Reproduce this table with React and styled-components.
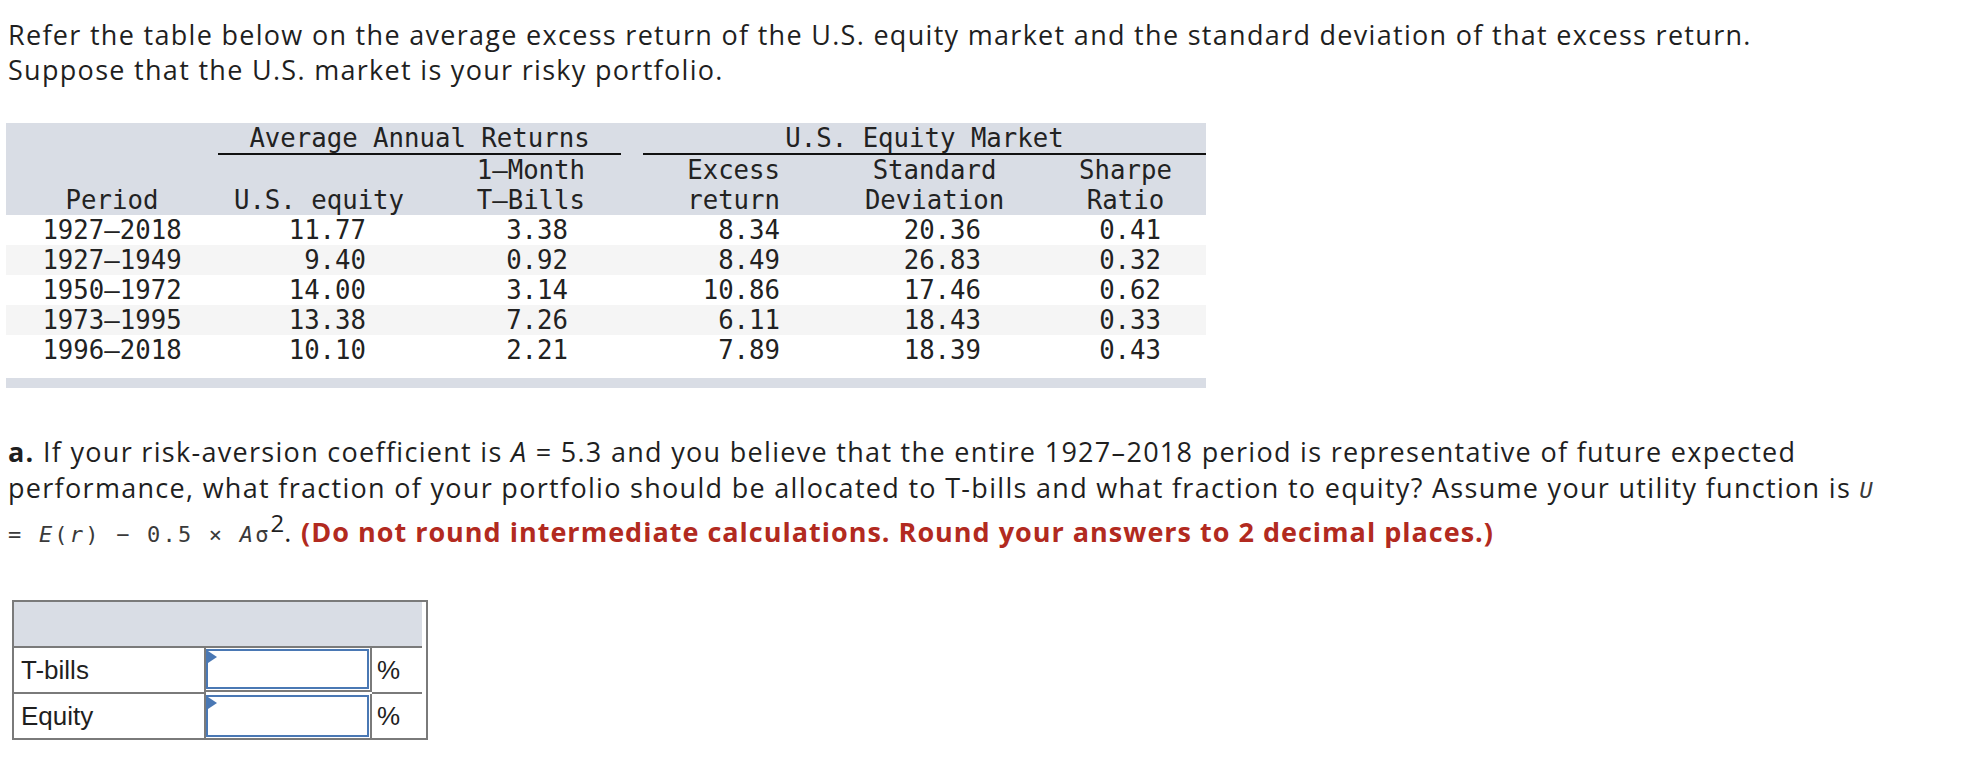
import React from 'react'
import styled, { createGlobalStyle } from 'styled-components'

const GlobalStyle = createGlobalStyle`
  html, body {
    margin: 0;
    padding: 0;
    background: #ffffff;
  }
  body {
    font-family: "Open Sans", Lato, "Liberation Sans", sans-serif;
    color: #1f1f1f;
  }
`

const COLS = '212px 202px 201px 22px 187px 209px 167px'

const Page = styled.div`
  padding: 17px 0 0 6px;
  width: 1960px;
`

const Intro = styled.p`
  margin: 0 0 0 2px;
  font-size: 27px;
  letter-spacing: 1.3px;
  line-height: 35px;
  white-space: nowrap;
`

const DataTable = styled.div`
  margin-top: 36px;
  width: 1200px;
  font-family: "DejaVu Sans Mono", "Liberation Mono", monospace;
  font-size: 25.7px;
  color: #222;
`

const Head = styled.div`
  background: #d9dde5;
  display: grid;
  grid-template-columns: ${COLS};
`

const GroupCell = styled.div`
  grid-column: ${p => p.$col};
  height: 30px;
  line-height: 30px;
  text-align: center;
  white-space: pre;
  border-bottom: 2px solid ${p => (p.$rule ? '#111' : 'transparent')};
`

const HeadCell = styled.div`
  grid-column: ${p => p.$col};
  line-height: 30px;
  height: 60px;
  display: flex;
  flex-direction: column;
  justify-content: flex-end;
  text-align: ${p => p.$align || 'center'};
  padding-right: ${p => p.$pr || 0}px;
  padding-left: ${p => p.$pl || 0}px;
  white-space: pre;
`

const Row = styled.div`
  display: grid;
  grid-template-columns: ${COLS};
  height: 30px;
  line-height: 30px;
  background: ${p => (p.$stripe ? '#f5f5f5' : '#ffffff')};
`

const Cell = styled.div`
  text-align: ${p => p.$align || 'right'};
  padding-right: ${p => p.$pr || 0}px;
  white-space: pre;
`

const FootBar = styled.div`
  margin-top: 13px;
  height: 10px;
  background: #d9dde5;
`

const Question = styled.div`
  margin: 46px 0 0 2px;
  font-size: 27px;
  letter-spacing: 1.3px;
  line-height: 36px;
  white-space: nowrap;
`

const Line = styled.div`
  margin-top: ${p => p.$gap || 0}px;
`

const Bold = styled.b`
  font-weight: 700;
`

const Ital = styled.i`
  font-style: italic;
`

const Formula = styled.span`
  font-family: "DejaVu Sans Mono", "Liberation Mono", monospace;
  font-size: 22px;
  letter-spacing: 2.2px;
  color: #3a3a3a;
`

const Sup = styled.sup`
  font-size: 24px;
  line-height: 0;
  letter-spacing: 0;
`

const Warn = styled.span`
  color: #b22a20;
  font-weight: 700;
  letter-spacing: 1px;
`

const AnswerTable = styled.div`
  margin: 47px 0 0 6px;
  width: 412px;
  display: grid;
  grid-template-columns: 192px 166px 50px;
  border: 2px solid #7a7a7a;
  font-family: "Liberation Sans", Arial, sans-serif;
  font-size: 26px;
  color: #1f1f1f;
`

const AnswerHead = styled.div`
  grid-column: 1 / 4;
  height: 44px;
  background: #d9dde5;
  border-bottom: 2px solid #7a7a7a;
`

const LabelCell = styled.div`
  height: 44px;
  display: flex;
  align-items: center;
  padding-left: 7px;
  border-right: 2px solid #7a7a7a;
  border-bottom: ${p => (p.$last ? 'none' : '2px solid #7a7a7a')};
`

const InputCell = styled.div`
  height: 44px;
  padding: 1px 1px 1px 0;
  box-sizing: border-box;
  border-right: 2px solid #7a7a7a;
  border-bottom: ${p => (p.$last ? 'none' : '2px solid #7a7a7a')};
  display: flex;
`

const InputBox = styled.div`
  position: relative;
  flex: 1;
  border: 2px solid #4a78b4;
  background: #fff;
  &::before {
    content: '';
    position: absolute;
    top: 0;
    left: 0;
    border-top: 6px solid transparent;
    border-bottom: 6px solid transparent;
    border-left: 9px solid #4a78b4;
  }
`

const UnitCell = styled.div`
  height: 44px;
  display: flex;
  align-items: center;
  padding-left: 5px;
  border-bottom: ${p => (p.$last ? 'none' : '2px solid #7a7a7a')};
`

const rows = [
  ['1927–2018', '11.77', '3.38', '8.34', '20.36', '0.41'],
  ['1927–1949', '9.40', '0.92', '8.49', '26.83', '0.32'],
  ['1950–1972', '14.00', '3.14', '10.86', '17.46', '0.62'],
  ['1973–1995', '13.38', '7.26', '6.11', '18.43', '0.33'],
  ['1996–2018', '10.10', '2.21', '7.89', '18.39', '0.43'],
]

const answers = ['T-bills', 'Equity']

export default function App() {
  return (
    <Page>
      <GlobalStyle />
      <Intro>
        Refer the table below on the average excess return of the U.S. equity market and the standard deviation of that excess return.
        <br />
        Suppose that the U.S. market is your risky portfolio.
      </Intro>

      <DataTable>
        <Head>
          <GroupCell $col="1" />
          <GroupCell $col="2 / 4" $rule>Average Annual Returns</GroupCell>
          <GroupCell $col="4" />
          <GroupCell $col="5 / 8" $rule>U.S. Equity Market</GroupCell>

          <HeadCell $col="1">Period</HeadCell>
          <HeadCell $col="2">U.S. equity</HeadCell>
          <HeadCell $col="3" $align="right" $pr={36}>
            <span>1–Month</span>
            <span>T–Bills</span>
          </HeadCell>
          <HeadCell $col="4" />
          <HeadCell $col="5" $align="right" $pr={50}>
            <span>Excess</span>
            <span>return</span>
          </HeadCell>
          <HeadCell $col="6">
            <span>Standard</span>
            <span>Deviation</span>
          </HeadCell>
          <HeadCell $col="7" $pl={6}>
            <span>Sharpe</span>
            <span>Ratio</span>
          </HeadCell>
        </Head>

        {rows.map((r, i) => (
          <Row key={r[0]} $stripe={i % 2 === 1}>
            <Cell $align="center">{r[0]}</Cell>
            <Cell $pr={54}>{r[1]}</Cell>
            <Cell $pr={53}>{r[2]}</Cell>
            <Cell />
            <Cell $pr={50}>{r[3]}</Cell>
            <Cell $pr={58}>{r[4]}</Cell>
            <Cell $pr={45}>{r[5]}</Cell>
          </Row>
        ))}
        <FootBar />
      </DataTable>

      <Question>
        <Line>
          <Bold>a.</Bold> If your risk-aversion coefficient is <Ital>A</Ital> = 5.3 and you believe that the entire 1927–2018 period is representative of future expected
        </Line>
        <Line>
          performance, what fraction of your portfolio should be allocated to T-bills and what fraction to equity? Assume your utility function is{' '}
          <Formula><Ital>U</Ital></Formula>
        </Line>
        <Line $gap={5}>
          <Formula>= <Ital>E</Ital>(<Ital>r</Ital>) − 0.5 × <Ital>A</Ital>σ</Formula><Sup>2</Sup>.{' '}
          <Warn>(Do not round intermediate calculations. Round your answers to 2 decimal places.)</Warn>
        </Line>
      </Question>

      <AnswerTable>
        <AnswerHead />
        {answers.map((a, i) => (
          <React.Fragment key={a}>
            <LabelCell $last={i === answers.length - 1}>{a}</LabelCell>
            <InputCell $last={i === answers.length - 1}>
              <InputBox />
            </InputCell>
            <UnitCell $last={i === answers.length - 1}>%</UnitCell>
          </React.Fragment>
        ))}
      </AnswerTable>
    </Page>
  )
}
